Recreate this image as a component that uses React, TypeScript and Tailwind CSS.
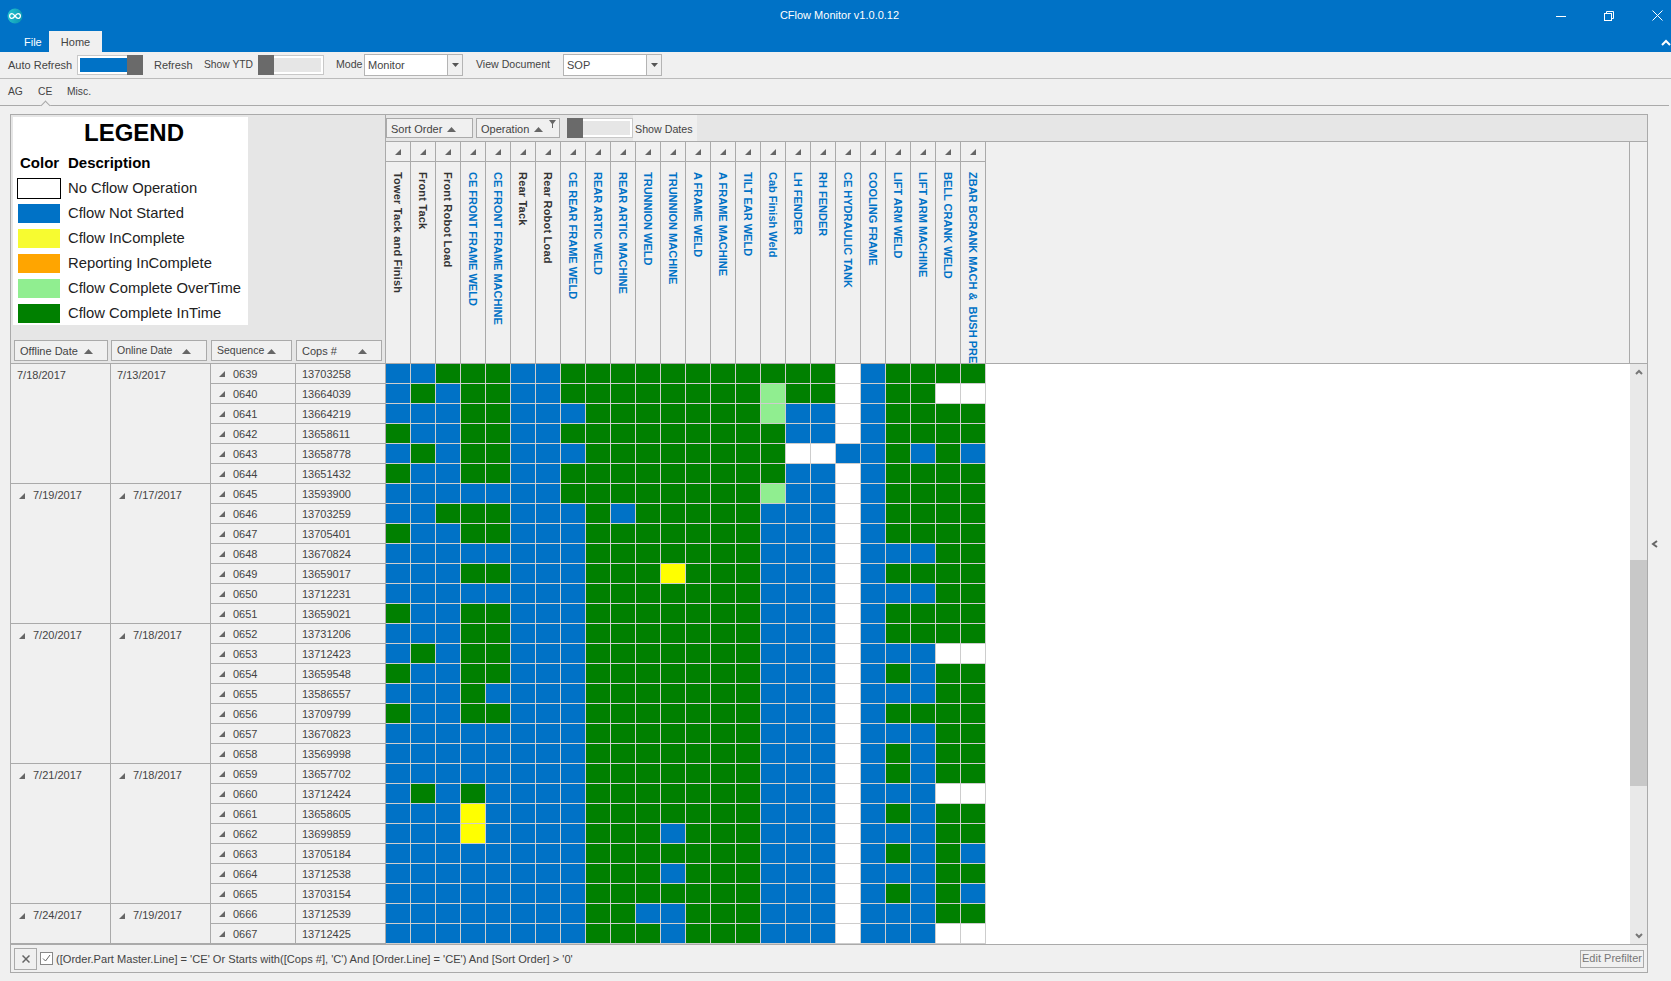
const BLUE = "bg-[#0072c6]";

const cellColors: Record<string, string> = {
  B: "bg-[#0072c6]",
  G: "bg-[#008000]",
  W: "bg-white",
  L: "bg-[#90ee90]",
  Y: "bg-[#ffff00]",
};

const columns = [
  { name: "Tower Tack and Finish", dark: true },
  { name: "Front Tack", dark: true },
  { name: "Front Robot Load", dark: true },
  { name: "CE FRONT FRAME WELD" },
  { name: "CE FRONT FRAME MACHINE" },
  { name: "Rear Tack", dark: true },
  { name: "Rear Robot Load", dark: true },
  { name: "CE REAR FRAME WELD" },
  { name: "REAR ARTIC WELD" },
  { name: "REAR ARTIC MACHINE" },
  { name: "TRUNNION WELD" },
  { name: "TRUNNION MACHINE" },
  { name: "A FRAME WELD" },
  { name: "A FRAME MACHINE" },
  { name: "TILT EAR WELD" },
  { name: "Cab Finish Weld" },
  { name: "LH FENDER" },
  { name: "RH FENDER" },
  { name: "CE HYDRAULIC TANK" },
  { name: "COOLING FRAME" },
  { name: "LIFT ARM WELD" },
  { name: "LIFT ARM MACHINE" },
  { name: "BELL CRANK WELD" },
  { name: "ZBAR BCRANK MACH &  BUSH PRESS" },
];

// seq, cops #, one letter per operation column
const rows: [string, string, string][] = [
  ["0639", "13703258", "BBGGGBBGGGGGGGGGGGWBGGGG"],
  ["0640", "13664039", "BGBGGBBGGGGGGGGLGGWBGGWW"],
  ["0641", "13664219", "BBBGGBBBGGGGGGGLBBWBGGGG"],
  ["0642", "13658611", "GBBGGBBGGGGGGGGGBBWBGGGG"],
  ["0643", "13658778", "BGBGGBBBGGGGGGGGWWBBGBGB"],
  ["0644", "13651432", "GBBGGBBGGGGGGGGGBBWBGGGG"],
  ["0645", "13593900", "BBBBBBBGGGGGGGGLBBWBGGGG"],
  ["0646", "13703259", "BBGGGBBBGBGGGGGBBBWBGGGG"],
  ["0647", "13705401", "GBBGGBBBGGGGGGGBBBWBGGGG"],
  ["0648", "13670824", "BBBBBBBBGGGGGGGBBBWBBBGG"],
  ["0649", "13659017", "BBBGGBBBGGGYGGGBBBWBGGGG"],
  ["0650", "13712231", "BBBBBBBBGGGGGGGBBBWBBBGG"],
  ["0651", "13659021", "GBBGGBBBGGGGGGGBBBWBGGGG"],
  ["0652", "13731206", "BBBGGBBBGGGGGGGBBBWBGGGG"],
  ["0653", "13712423", "BGBGGBBBGGGGGGGBBBWBBBWW"],
  ["0654", "13659548", "GBBGGBBBGGGGGGGBBBWBGBGG"],
  ["0655", "13586557", "BBBGBBBBGGGGGGGBBBWBBBGG"],
  ["0656", "13709799", "GBBGGBBBGGGGGGGBBBWBGGGG"],
  ["0657", "13670823", "BBBBBBBBGGGGGGGBBBWBBBGG"],
  ["0658", "13569998", "BBBBBBBBGGGGGGGBBBWBGBGG"],
  ["0659", "13657702", "BBBBBBBBGGGGGGGBBBWBGBGG"],
  ["0660", "13712424", "BGBGBBBBGGGGGGGBBBWBBBWW"],
  ["0661", "13658605", "BBBYBBBBGGGGGGGBBBWBGBGG"],
  ["0662", "13699859", "BBBYBBBBGGGBGGGBBBWBBBGG"],
  ["0663", "13705184", "BBBBBBBBGGGGGGGBBBWBGBGB"],
  ["0664", "13712538", "BBBBBBBBGGGBGGGBBBWBBBGG"],
  ["0665", "13703154", "BBBBBBBBGGGGGGGBBBWBGBGB"],
  ["0666", "13712539", "BBBBBBBBGGBBGGGBBBWBBBGG"],
  ["0667", "13712425", "BBBBBBBBGGGBGGGBBBWBBBWW"],
];

const groups = [
  { offline: "7/18/2017", online: "7/13/2017", count: 6, arrow: false },
  { offline: "7/19/2017", online: "7/17/2017", count: 7, arrow: true },
  { offline: "7/20/2017", online: "7/18/2017", count: 7, arrow: true },
  { offline: "7/21/2017", online: "7/18/2017", count: 7, arrow: true },
  { offline: "7/24/2017", online: "7/19/2017", count: 2, arrow: true },
];

const legend = [
  { label: "No Cflow Operation", cls: "bg-white border border-black h-[21px] w-[44px] -ml-px" },
  { label: "Cflow Not Started", cls: "bg-[#0072c6]" },
  { label: "Cflow InComplete", cls: "bg-[#f7fb30]" },
  { label: "Reporting InComplete", cls: "bg-[#ffa500]" },
  { label: "Cflow Complete OverTime", cls: "bg-[#90ee90]" },
  { label: "Cflow Complete InTime", cls: "bg-[#008000]" },
];

const ExpandIcon = () => (
  <svg width="6" height="6" viewBox="0 0 6 6" className="shrink-0 text-[#666]">
    <polygon points="6,0 6,6 0,6" fill="currentColor" />
  </svg>
);

const SortArrow = ({ className = "" }: { className?: string }) => (
  <svg width="9" height="5" viewBox="0 0 9 5" className={`shrink-0 text-[#666] ${className}`}>
    <polygon points="4.5,0 9,5 0,5" fill="currentColor" />
  </svg>
);

const Chevron = ({ points, className = "" }: { points: string; className?: string }) => (
  <svg width="10" height="10" viewBox="0 0 10 10" fill="none" className={className}>
    <polyline points={points} stroke="currentColor" strokeWidth="2" />
  </svg>
);

const Toggle = ({ on }: { on?: boolean }) => (
  <div className="flex h-[20px] w-[66px] shrink-0">
    {on ? (
      <>
        <div className="flex-1 border border-r-0 border-[#c8c8c8] bg-white py-[2px] pl-[2px]">
          <div className="h-full bg-[#0072c6]" />
        </div>
        <div className="w-[16px] bg-[#6a6a6a]" />
      </>
    ) : (
      <>
        <div className="w-[16px] bg-[#6a6a6a]" />
        <div className="flex-1 border border-l-0 border-[#c8c8c8] bg-white py-[2px] pr-[2px]">
          <div className="h-full bg-[#e6e6e6]" />
        </div>
      </>
    )}
  </div>
);

const Combo = ({ value }: { value: string }) => (
  <div className="flex h-[22px] w-[99px] shrink-0 border border-[#b4b4b4] bg-white">
    <div className="flex-1 pl-[3px] leading-[20px]">{value}</div>
    <div className="flex w-[15px] items-center justify-center border-l border-[#b4b4b4] bg-[#f0f0f0]">
      <svg width="7" height="4" viewBox="0 0 7 4">
        <polygon points="0,0 7,0 3.5,4" fill="#555" />
      </svg>
    </div>
  </div>
);

const FieldButton = ({ label, width, gap, small }: { label: string; width: string; gap: string; small?: boolean }) => (
  <div className={`flex h-[21px] shrink-0 items-center border border-[#aaa] bg-[#f0f0f0] pl-[5px] pt-px ${width}`}>
    <span className={small ? "text-[10.5px]" : ""}>{label}</span>
    <SortArrow className={gap} />
  </div>
);

export default function App() {
  return (
    <div className="flex h-[981px] w-[1671px] flex-col overflow-hidden bg-[#f0f0f0] font-['Liberation_Sans',sans-serif] text-[11px] text-[#444]">
      {/* title bar */}
      <div className={`${BLUE} flex h-[31px] items-center px-[6px] text-white`}>
        <svg width="20" height="20" viewBox="0 0 20 20" className="ml-[-1px]">
          <defs>
            <linearGradient id="logo-fill" x1="0" y1="0" x2="1" y2="0.3">
              <stop offset="0" stopColor="#27c8d2" />
              <stop offset="1" stopColor="#0f9ab6" />
            </linearGradient>
          </defs>
          <circle cx="10" cy="10" r="7.500" fill="url(#logo-fill)" />
          <path d="M10 10c-1.500-2-2-2.400-3-2.400a2.400 2.400 0 000 4.800c1 0 1.500-.4 3-2.400s2-2.400 3-2.400a2.400 2.400 0 010 4.800c-1 0-1.500-.4-3-2.400z" fill="none" stroke="white" strokeWidth="1.300" />
        </svg>
        <div className="flex-1 pl-[98px] text-center">CFlow Monitor v1.0.0.12</div>
        <div className="flex items-center gap-[38px] pr-[2px]">
          <svg width="10" height="10" viewBox="0 0 10 10"><line x1="0" y1="5.500" x2="10" y2="5.500" stroke="white" /></svg>
          <svg width="10" height="10" viewBox="0 0 10 10" fill="none" stroke="white"><rect x="0.500" y="2.500" width="7" height="7" /><path d="M2.500 2.500V.5h7v7h-2" /></svg>
          <svg width="11" height="11" viewBox="0 0 11 11" stroke="white"><line x1="0.500" y1="0.500" x2="10.500" y2="10.500" /><line x1="10.500" y1="0.500" x2="0.500" y2="10.500" /></svg>
        </div>
      </div>
      {/* ribbon tabs */}
      <div className={`${BLUE} flex h-[21px] items-end pl-[24px] text-white`}>
        <div className="w-[25px] pb-[2px] leading-[15px]">File</div>
        <div className="flex h-[21px] w-[53px] items-center justify-center bg-[#f0f0f0] pt-[2px] text-[#444]">Home</div>
        <div className="flex-1" />
        <Chevron points="1,7 5,3 9,7" className="mb-[4px] text-white" />
      </div>
      {/* toolbar */}
      <div className="flex h-[27px] shrink-0 items-center border-b border-[#bbb] pl-[8px]">
        <span className="w-[69px]">Auto Refresh</span>
        <Toggle on />
        <span className="ml-[11px] w-[50px]">Refresh</span>
        <span className="w-[54px] text-[10.3px]">Show YTD</span>
        <Toggle />
        <span className="ml-[12px] w-[28px] text-[10.6px]">Mode</span>
        <Combo value="Monitor" />
        <span className="ml-[13px] w-[87px] text-[10.6px]">View Document</span>
        <Combo value="SOP" />
      </div>
      {/* page tabs */}
      <div className="relative mr-[2px] flex h-[27px] shrink-0 items-center border-b border-[#aaa] pb-px pl-[8px] text-[10.3px]">
        <span className="w-[30px]">AG</span>
        <span className="w-[29px]">CE</span>
        <span>Misc.</span>
        <div className="absolute bottom-[-4px] left-[42px] h-[7px] w-[7px] rotate-45 border-l border-t border-[#aaa] bg-[#f0f0f0]" />
      </div>

      <div className="flex flex-1 pl-[10px] pt-[8px]">
        {/* pivot panel */}
        <div className="flex h-[859px] w-[1638px] flex-col border border-[#aaa]">
          {/* header area */}
          <div className="flex h-[249px] shrink-0 border-b border-[#aaa]">
            <div className="flex w-[375px] shrink-0 flex-col border-r border-[#aaa] bg-[#e6e6e6]">
              <div className="ml-[2px] mt-[2px] h-[208px] w-[235px] bg-white text-black">
                <div className="h-[34px] pl-[7px] pt-px text-center text-[24px] font-bold leading-[30px]">LEGEND</div>
                <div className="flex h-[25px] items-center text-[15px] font-bold">
                  <span className="w-[55px] pl-[7px]">Color</span>
                  <span>Description</span>
                </div>
                {legend.map((item) => (
                  <div key={item.label} className="flex h-[25px] items-center text-[14.8px] text-[#222]">
                    <div className="ml-[5px] w-[50px]">
                      <div className={`h-[19px] w-[42px] ${item.cls}`} />
                    </div>
                    <span className="whitespace-nowrap">{item.label}</span>
                  </div>
                ))}
              </div>
              <div className="mt-[15px] flex gap-[3px] pl-[3px]">
                <FieldButton label="Offline Date" width="w-[94px]" gap="ml-[6px]" />
                <FieldButton label="Online Date" width="w-[96px]" gap="ml-[10px]" small />
                <div className="ml-px">
                  <FieldButton label="Sequence" width="w-[81px]" gap="ml-[3px]" small />
                </div>
                <div className="ml-px">
                  <FieldButton label="Cops #" width="w-[86px]" gap="ml-[21px]" />
                </div>
              </div>
            </div>
            <div className="flex min-w-0 flex-1 flex-col">
              <div className="flex h-[27px] shrink-0 items-center border-b border-[#aaa] bg-[#e6e6e6]">
                <div className="flex h-[20px] w-[87px] items-center border border-[#aaa] bg-[#f0f0f0] pl-[4px] pt-[2px]">
                  <span>Sort Order</span>
                  <SortArrow className="ml-[5px]" />
                </div>
                <div className="relative ml-[3px] flex h-[20px] w-[84px] items-center border border-[#aaa] bg-[#f0f0f0] pl-[4px] pt-[2px]">
                  <span>Operation</span>
                  <SortArrow className="ml-[5px]" />
                  <svg width="7" height="8" viewBox="0 0 7 8" className="absolute right-[3px] top-[1px]">
                    <path d="M0 0h7L4 4v4H3V4z" fill="#666" />
                  </svg>
                </div>
                <div className="ml-[7px]">
                  <Toggle />
                </div>
                <div className="flex h-[26px] w-[64px] items-center bg-[#f0f0f0] pl-[2px] pt-[2px] text-[10.7px]">Show Dates</div>
              </div>
              <div className="flex min-h-0 flex-1 bg-[#f0f0f0]">
                {columns.map((col) => (
                  <div key={col.name} className="flex w-[25px] shrink-0 flex-col border-r border-[#aaa]">
                    <div className="flex h-[20px] shrink-0 items-center justify-center border-b border-[#aaa]">
                      <ExpandIcon />
                    </div>
                    <div
                      className={`flex-1 overflow-hidden whitespace-pre pr-[5px] pt-[10px] text-[11px] font-bold leading-[14px] [writing-mode:vertical-rl] ${
                        col.dark ? "text-[#333] tracking-[0.2px]" : "text-[#0072c6]"
                      }`}
                    >
                      {col.name}
                    </div>
                  </div>
                ))}
                <div className="flex-1" />
                <div className="w-[18px] shrink-0 border-l border-[#aaa]" />
              </div>
            </div>
          </div>

          {/* data area */}
          <div className="flex h-[580px] shrink-0">
            <div className="flex w-[200px] shrink-0 flex-col">
              {groups.map((g) => (
                <div
                  key={g.offline}
                  className="flex"
                  style={{ height: g.count * 20 }}
                >
                  {[g.offline, g.online].map((date, i) => (
                    <div key={i} className="flex h-full w-[100px] items-start border-b border-r border-[#aaa] pt-[5px]">
                      {g.arrow ? (
                        <div className="flex h-[13px] items-center gap-[8px] pl-[8px]">
                          <ExpandIcon />
                          <span>{date}</span>
                        </div>
                      ) : (
                        <span className="pl-[6px] leading-[13px]">{date}</span>
                      )}
                    </div>
                  ))}
                </div>
              ))}
            </div>
            <div className="flex flex-col">
              {rows.map(([seq, cops, cells]) => (
                <div key={seq} className="flex h-[20px]">
                  <div className="flex w-[85px] items-center gap-[8px] border-b border-r border-[#aaa] pl-[8px] pt-px">
                    <ExpandIcon />
                    <span>{seq}</span>
                  </div>
                  <div className="flex w-[90px] items-center border-b border-r border-[#aaa] pl-[6px] pt-px">{cops}</div>
                  {cells.split("").map((c, i) => (
                    <div key={i} className={`h-[20px] w-[25px] border-b border-r border-[#cdcdcd] ${cellColors[c]}`} />
                  ))}
                </div>
              ))}
            </div>
            <div className="flex-1 bg-white" />
            <div className="flex w-[17px] shrink-0 flex-col items-center bg-[#e9e9e9] text-[#777]">
              <div className="flex h-[196px] w-full flex-col items-center pt-[3px]">
                <Chevron points="2,7 5,4 8,7" />
              </div>
              <div className="h-[226px] w-full bg-[#c8c8c8]" />
              <div className="flex h-[158px] w-full flex-col items-center justify-end pb-[3px]">
                <Chevron points="2,3 5,6 8,3" />
              </div>
            </div>
          </div>

          {/* prefilter bar */}
          <div className="flex flex-1 items-center border-t border-[#aaa] pl-[3px] pr-[3px]">
            <div className="flex h-[22px] w-[23px] items-center justify-center border border-[#aaa]">
              <svg width="8" height="8" viewBox="0 0 8 8" stroke="#666" strokeWidth="1.500"><line x1="0.500" y1="0.500" x2="7.500" y2="7.500" /><line x1="7.500" y1="0.500" x2="0.500" y2="7.500" /></svg>
            </div>
            <div className="ml-[3px] flex h-[13px] w-[13px] items-center justify-center border border-[#888] bg-white">
              <svg width="11" height="11" viewBox="0 0 11 11" fill="none" stroke="#666"><path d="M2 5.500l2.500 2.500L9 2" /></svg>
            </div>
            <span className="ml-[3px] flex-1 whitespace-pre pt-px text-[11.1px]">{"([Order.Part Master.Line] = 'CE' Or Starts with([Cops #], 'C') And [Order.Line] = 'CE') And [Sort Order] > '0'"}</span>
            <div className="flex h-[18px] w-[64px] items-center justify-center border border-[#aaa] text-[#777]">Edit Prefilter</div>
          </div>
        </div>

        {/* collapsed side panel */}
        <div className="flex flex-1 items-start justify-start pl-[2px] pt-[425px] text-[#666]">
          <Chevron points="7,2 3,5 7,8" />
        </div>
      </div>
    </div>
  );
}
